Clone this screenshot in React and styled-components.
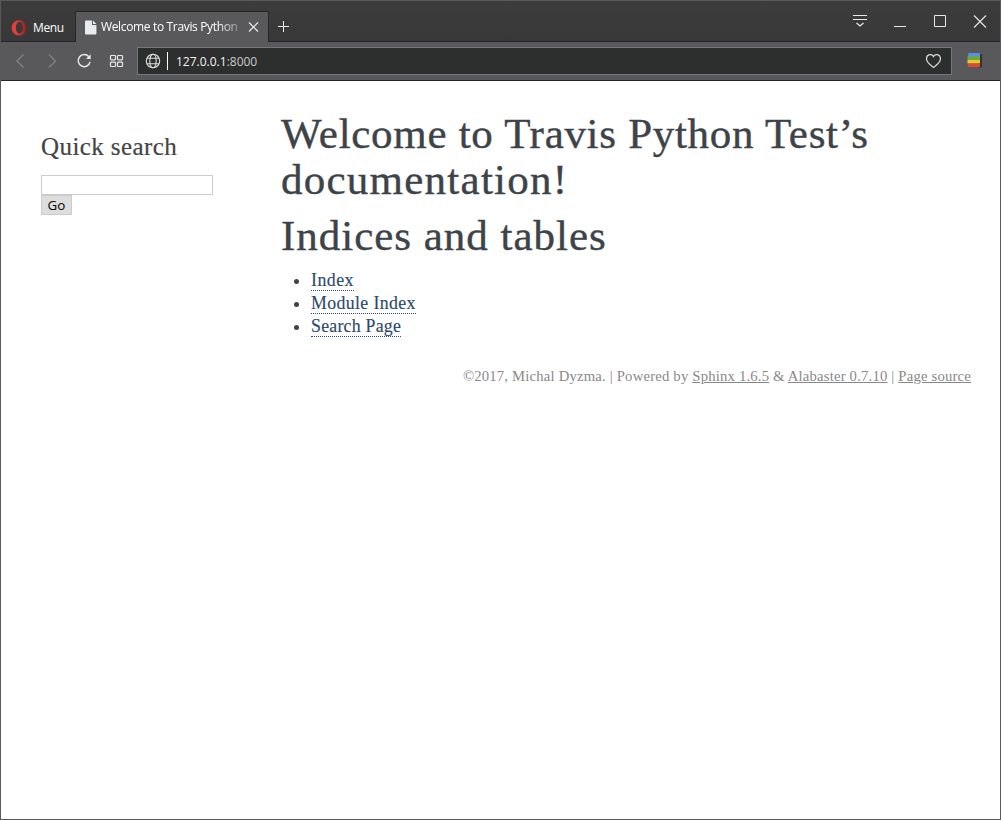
import React from "react";
import styled, { createGlobalStyle } from "styled-components";

const Global = createGlobalStyle`
  *, *::before, *::after { box-sizing: border-box; }
  body { margin: 0; background: #fff; }
`;

const Window = styled.div`
  width: 1001px;
  height: 820px;
  display: flex;
  flex-direction: column;
  border: 1px solid #59595b;
  background: #fff;
  overflow: hidden;
  font-family: "Open Sans", "Noto Sans", sans-serif;
`;

const TabStrip = styled.header`
  height: 41px;
  flex: none;
  display: flex;
  align-items: flex-end;
  background: linear-gradient(#3c3c3c, #383838);
  box-shadow: inset 0 -1px #262626;
`;

const MenuButton = styled.div`
  width: 74px;
  height: 30px;
  display: flex;
  align-items: center;
  gap: 6px;
  padding: 1px 0 0 10px;
  color: #fff;
  font-size: 12px;
  letter-spacing: -0.35px;
`;

const Tab = styled.div`
  width: 194px;
  height: 31px;
  display: flex;
  align-items: center;
  padding: 0 9px 0 9px;
  border: 1px solid #262626;
  border-bottom: 0;
  background: #59595b;
  color: #fff;
`;

const TabTitle = styled.span`
  width: 138px;
  margin-left: 4px;
  overflow: hidden;
  white-space: nowrap;
  font-size: 12px;
  line-height: 18px;
  letter-spacing: -0.34px;
  mask-image: linear-gradient(to right, #000 116px, rgba(0, 0, 0, 0.3) 138px);
`;

const CloseIcon = styled.svg`
  margin-left: 9px;
  flex: none;
`;

const NewTab = styled.div`
  display: flex;
  padding: 0 0 9px 8px;
`;

const WindowControls = styled.div`
  display: flex;
  align-self: flex-start;
  gap: 20px;
  margin: 10px 10px 0 auto;
`;

const Toolbar = styled.nav`
  height: 39px;
  flex: none;
  display: flex;
  align-items: center;
  padding: 0 16px 0 9px;
  background: #59595b;
  border-bottom: 1px solid #262324;
`;

const NavIcons = styled.div`
  display: flex;
  gap: 12px;
`;

const AddressBar = styled.div`
  width: 815px;
  height: 28px;
  display: flex;
  align-items: center;
  margin: 0 14px 0 11px;
  padding: 0 10px 0 7px;
  border: 1px solid #747777;
  background: #2d2f2e;
`;

const Divider = styled.span`
  width: 1px;
  height: 18px;
  margin: 0 8px 0 6px;
  background: #fff;
`;

const Url = styled.span`
  flex: 1;
  color: #f4f4f4;
  font-size: 12px;
  letter-spacing: 0;
  span { color: #c9c9c9; }
`;

const Page = styled.div`
  flex: 1;
  display: flex;
  padding: 30px 29px 0 40px;
  color: #3e4349;
  font-family: "Liberation Serif", serif;
`;

const Sidebar = styled.aside`
  width: 240px;
  flex: none;
  padding-top: 20px;
`;

const SidebarTitle = styled.h3`
  margin: 0 0 13px;
  font-size: 25px;
  font-weight: 400;
  line-height: 31px;
  letter-spacing: 0.42px;
  color: #444;
  -webkit-text-stroke: 0.2px;
`;

const SearchForm = styled.form`
  display: flex;
  flex-direction: column;
  align-items: flex-start;
`;

const SearchInput = styled.input`
  width: 172px;
  height: 20px;
  padding: 0 3px;
  border: 1px solid #ccc;
  border-radius: 0;
  outline: 0;
  background: #fff;
`;

const GoButton = styled.button`
  width: 31px;
  height: 20px;
  padding: 0;
  border: 1px solid #ccc;
  border-radius: 0;
  background: #ddd;
  color: #000;
  font: 13.4px/18px "Open Sans", sans-serif;
`;

const Body = styled.main`
  flex: 1;
`;

const Heading = styled.h1`
  margin: 0 0 10px;
  font-size: 43px;
  font-weight: 400;
  line-height: 46px;
  -webkit-text-stroke: 0.4px;
`;

const Line = styled.span`
  display: block;
  white-space: nowrap;
  letter-spacing: ${(p) => p.$spacing}px;
`;

const LinkList = styled.ul`
  margin: 0;
  padding: 0 0 0 30px;
  font-size: 17.8px;
  line-height: 23px;
`;

const PageLink = styled.a`
  display: inline-block;
  height: 22px;
  line-height: 23px;
  vertical-align: top;
  color: #2b4a6b;
  border-bottom: 1px dotted #2b4a6b;
  letter-spacing: ${(p) => p.$spacing}px;
  -webkit-text-stroke: 0.15px;
`;

const Footer = styled.footer`
  margin-top: 28px;
  color: #888;
  font-size: 14.7px;
  line-height: 20px;
  letter-spacing: 0.19px;
  text-align: right;
  white-space: nowrap;
  a { color: #888; text-decoration: underline; }
`;

const Icon = ({ children, size = 20, color = "#e8e8e8", width = 1.2 }) => (
  <svg width={size} height={size} viewBox={`0 0 ${size} ${size}`} fill="none" stroke={color} strokeWidth={width}>
    {children}
  </svg>
);

export default function App() {
  return (
    <>
      <Global />
      <Window>
        <TabStrip>
          <MenuButton>
            <svg width="16" height="16" viewBox="0 0 16 16">
              <defs>
                <linearGradient id="ring" x1="0" x2="1">
                  <stop offset="0.35" stopColor="#e0403a" />
                  <stop offset="1" stopColor="#8e1f20" />
                </linearGradient>
              </defs>
              <path
                fill="url(#ring)"
                fillRule="evenodd"
                d="M8 0.200a7.400 7.600 0 1 0 0 15.200a7.400 7.600 0 1 0 0-15.200zM8.400 2.100c2 0 3.400 2.500 3.400 5.700s-1.400 5.700-3.400 5.700s-3.500-2.500-3.500-5.700s1.500-5.700 3.500-5.700z"
              />
            </svg>
            Menu
          </MenuButton>
          <Tab>
            <svg width="12" height="15" viewBox="0 0 12 15" fill="#e9ecee">
              <path d="M1 0.500h6v4.500h4.500v8.500a1 1 0 0 1-1 1h-9.500a1 1 0 0 1-1-1v-12a1 1 0 0 1 1-1zM8 0.500l3.500 3.500h-3.500z" />
            </svg>
            <TabTitle>Welcome to Travis Python</TabTitle>
            <CloseIcon width="12" height="12" viewBox="0 0 12 12" stroke="#eee" strokeWidth="1.2">
              <path d="M2 1.500l9 9M11 1.500l-9 9" />
            </CloseIcon>
          </Tab>
          <NewTab>
            <svg width="12" height="12" viewBox="0 0 12 12" stroke="#eee" strokeWidth="1">
              <path d="M1 5.500h11M6.500 0v11" />
            </svg>
          </NewTab>
          <WindowControls>
            <Icon width={1}>
              <path d="M3 4.500h14M3 8.500h14" />
              <path d="M6.500 12l3.500 3l3.500-3" strokeWidth="1.3" />
            </Icon>
            <Icon width={1}><path d="M4 15.500h12" /></Icon>
            <Icon width={1}><path d="M4.500 4.500h11v11h-11z" /></Icon>
            <Icon width={1.1}><path d="M4 4.500l12 12M16 4.500l-12 12" /></Icon>
          </WindowControls>
        </TabStrip>

        <Toolbar>
          <NavIcons>
            <Icon color="#858587"><path d="M13.500 3.500l-6.500 6.500l6.500 6.500" /></Icon>
            <Icon color="#858587"><path d="M7 3.500l6.500 6.500l-6.500 6.500" /></Icon>
            <Icon width={1.5}>
              <path d="M14.800 5.700a6 6 0 1 0 1.300 5.200" />
              <path d="M16.700 3.300v4.700h-4.700z" fill="#e8e8e8" stroke="none" />
            </Icon>
            <Icon width={1.2}>
              <rect x="4.500" y="4.500" width="5" height="4.300" rx="0.800" />
              <rect x="11.500" y="4.500" width="5" height="4.300" rx="0.800" />
              <rect x="4.500" y="11.200" width="5" height="4.300" rx="0.800" />
              <rect x="11.500" y="11.200" width="5" height="4.300" rx="0.800" />
            </Icon>
          </NavIcons>
          <AddressBar>
            <Icon size={16} color="#dedede" width={1.1}>
              <circle cx="8" cy="8" r="6.700" />
              <ellipse cx="8" cy="8" rx="3.200" ry="6.700" />
              <path d="M2.300 5.200h11.400M2.300 10.800h11.400" />
            </Icon>
            <Divider />
            <Url>127.0.0.1<span>:8000</span></Url>
            <Icon size={16} color="#d8d8d8" width={1.2}>
              <path d="M8.500 14.500c-2.800-2.200-7-5-7-8.700c0-4.500 5.300-5.700 7-2.200c1.700-3.500 7-2.300 7 2.200c0 3.700-4.200 6.500-7 8.700z" />
            </Icon>
          </AddressBar>
          <svg width="18" height="18" viewBox="0 0 18 18">
            <path fill="#333" d="M13 2h3v12.500l-1 1h-3z" />
            <path fill="#5b8def" d="M2.500 1h11.500v3h-12z" />
            <path fill="#69aa46" d="M1.500 4h12.500v4h-12.500z" />
            <path fill="#efc52c" d="M1.500 8h12.500v3.500h-12.500z" />
            <path fill="#d84b32" d="M1.500 11.500h12.500v3.500h-12z" />
          </svg>
        </Toolbar>

        <Page>
          <Sidebar>
            <SidebarTitle>Quick search</SidebarTitle>
            <SearchForm>
              <SearchInput aria-label="Quick search" />
              <GoButton type="button">Go</GoButton>
            </SearchForm>
          </Sidebar>
          <Body>
            <Heading>
              <Line $spacing={0.7}>Welcome to Travis Python Test’s</Line>
              <Line $spacing={1.25}>documentation!</Line>
            </Heading>
            <Heading>
              <Line $spacing={0.98}>Indices and tables</Line>
            </Heading>
            <LinkList>
              <li><PageLink $spacing={0.5}>Index</PageLink></li>
              <li><PageLink $spacing={0.38}>Module Index</PageLink></li>
              <li><PageLink $spacing={0.24}>Search Page</PageLink></li>
            </LinkList>
            <Footer>
              ©2017, Michal Dyzma. | Powered by <a>Sphinx 1.6.5</a> &amp; <a>Alabaster 0.7.10</a> | <a>Page source</a>
            </Footer>
          </Body>
        </Page>
      </Window>
    </>
  );
}
